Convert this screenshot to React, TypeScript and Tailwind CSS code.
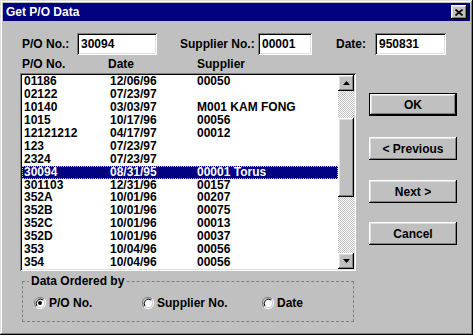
import React from 'react';

const rows = [
  ['01186', '12/06/96', '00050'],
  ['02122', '07/23/97', ''],
  ['10140', '03/03/97', 'M001 KAM FONG'],
  ['1015', '10/17/96', '00056'],
  ['12121212', '04/17/97', '00012'],
  ['123', '07/23/97', ''],
  ['2324', '07/23/97', ''],
  ['30094', '08/31/95', '00001 Torus'],
  ['301103', '12/31/96', '00157'],
  ['352A', '10/01/96', '00207'],
  ['352B', '10/01/96', '00075'],
  ['352C', '10/01/96', '00013'],
  ['352D', '10/01/96', '00037'],
  ['353', '10/04/96', '00056'],
  ['354', '10/04/96', '00056'],
];

const raised =
  'bg-[#c0c0c0] shadow-[inset_-1px_-1px_#000,inset_1px_1px_#fff,inset_-2px_-2px_#808080,inset_2px_2px_#dfdfdf]';
const sunken =
  'bg-white shadow-[inset_1px_1px_#808080,inset_-1px_-1px_#fff,inset_2px_2px_#000,inset_-2px_-2px_#dfdfdf]';
const dither =
  'bg-[repeating-conic-gradient(#c0c0c0_0%_25%,#ffffff_0%_50%)] bg-[length:2px_2px]';

const Field = ({ value, width }: { value: string; width: string }) => (
  <div className={`${sunken} ${width} h-[22px] flex items-center pl-[4px]`}>{value}</div>
);

const Button = ({ label, primary, className }: { label: string; primary?: boolean; className: string }) => (
  <div className={`${className} w-[88px] h-[23px] ${primary ? 'border border-black' : ''}`}>
    <div className={`${raised} w-full h-full flex items-center justify-center`}>{label}</div>
  </div>
);

const Radio = ({ checked }: { checked?: boolean }) => (
  <svg width="12" height="12" viewBox="0 0 12 12">
    <path d="M10 2 A5.5 5.5 0 0 0 2 10" fill="none" stroke="#808080" strokeWidth="1" />
    <path d="M2 10 A5.5 5.5 0 0 0 10 2" fill="none" stroke="#ffffff" strokeWidth="1" />
    <circle cx="6" cy="6" r="4.3" fill="#fff" />
    <path d="M9 3 A4.3 4.3 0 0 0 3 9" fill="none" stroke="#000" strokeWidth="1" />
    {checked && <circle cx="6" cy="6" r="2" fill="#000" />}
  </svg>
);

const Arrow = ({ down }: { down?: boolean }) => (
  <svg width="7" height="4" viewBox="0 0 7 4">
    <path d={down ? 'M0 0 H7 L3.5 4 Z' : 'M3.5 0 L7 4 H0 Z'} fill="#000" />
  </svg>
);

export default function App() {
  return (
    <div className="w-[473px] h-[335px] font-['Liberation_Sans',Arial,sans-serif] font-bold text-[12px] text-black">
      <div className="w-full h-full bg-[#c0c0c0] p-[3px] flex flex-col shadow-[inset_-1px_-1px_#000,inset_1px_1px_#dfdfdf,inset_-2px_-2px_#808080,inset_2px_2px_#fff]">
        {/* Title bar */}
        <div className="h-[18px] bg-[#000080] flex items-center justify-between pl-[3px] pr-[3px]">
          <span className="text-white">Get P/O Data</span>
          <div className={`${raised} w-[16px] h-[14px] flex items-center justify-center`}>
            <svg width="8" height="7" viewBox="0 0 8 7">
              <path d="M0.5 0.5 L7.5 6.5 M7.5 0.5 L0.5 6.5" stroke="#000" strokeWidth="1.6" />
            </svg>
          </div>
        </div>

        {/* Top fields */}
        <div className="flex items-center mt-[12px] ml-[19px]">
          <span className="w-[55px]">P/O No.:</span>
          <Field value="30094" width="w-[80px]" />
          <span className="w-[78px] ml-[23px]">Supplier No.:</span>
          <Field value="00001" width="w-[54px]" />
          <span className="w-[39px] ml-[24px]">Date:</span>
          <Field value="950831" width="w-[71px]" />
        </div>

        <div className="flex mt-[3px] ml-[17px]">
          {/* Left column */}
          <div className="w-[336px] flex flex-col">
            <div className="flex h-[13px] leading-[13px] pl-[2px]">
              <span className="w-[86px]">P/O No.</span>
              <span className="w-[89px]">Date</span>
              <span>Supplier</span>
            </div>
            <div className={`${sunken} mt-[2px] h-[198px] p-[2px] flex`}>
              <div className="flex-1 flex flex-col">
                {rows.map(([po, date, sup], i) => (
                  <div
                    key={i}
                    className={`h-[13px] leading-[12px] flex pl-[2px] ${
                      i === 7 ? 'bg-[#000080] text-white outline-1 outline-dotted outline-[#c0c0c0] -outline-offset-1' : ''
                    }`}
                  >
                    <span className="w-[86px]">{po}</span>
                    <span className="w-[87px]">{date}</span>
                    <span>{sup}</span>
                  </div>
                ))}
              </div>
              <div className="w-[16px] flex flex-col">
                <div className={`${raised} h-[16px] flex items-center justify-center`}>
                  <Arrow />
                </div>
                <div className={`${dither} h-[27px]`} />
                <div className={`${raised} h-[79px]`} />
                <div className={`${dither} flex-1`} />
                <div className={`${raised} h-[16px] flex items-center justify-center`}>
                  <Arrow down />
                </div>
              </div>
            </div>

            <fieldset className="ml-[2px] mr-[2px] mt-[4px] h-[47px] border border-dashed border-[#808080]">
              <legend className="ml-[6px] px-[2px] leading-[13px]">Data Ordered by</legend>
              <div className="flex items-center mt-[9px] ml-[11px] h-[12px]">
                <div className="w-[108px] flex items-center gap-[3px]">
                  <Radio checked />
                  <span>P/O No.</span>
                </div>
                <div className="w-[120px] flex items-center gap-[3px]">
                  <Radio />
                  <span>Supplier No.</span>
                </div>
                <div className="flex items-center gap-[3px]">
                  <Radio />
                  <span>Date</span>
                </div>
              </div>
            </fieldset>
          </div>

          {/* Buttons */}
          <div className="ml-[13px] flex flex-col">
            <Button label="OK" primary className="mt-[35px]" />
            <Button label="< Previous" className="mt-[21px]" />
            <Button label="Next >" className="mt-[20px]" />
            <Button label="Cancel" className="mt-[19px]" />
          </div>
        </div>
      </div>
    </div>
  );
}
